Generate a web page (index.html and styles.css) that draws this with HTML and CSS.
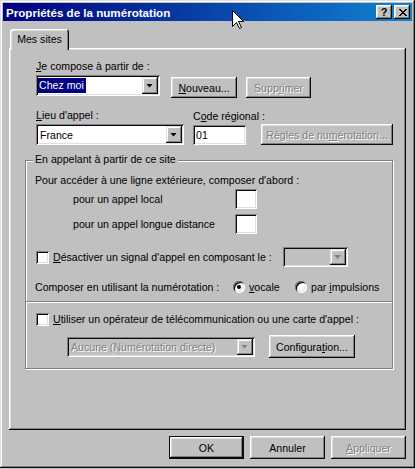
FILE: index.html
```html
<!DOCTYPE html>
<html lang="fr">
<head>
<meta charset="UTF-8">
<title>Propriétés de la numérotation</title>
<link rel="stylesheet" href="styles.css">
</head>
<body>
<div class="window">
<div class="titlebar">
<span class="title">Propriétés de la numérotation</span>
<div class="caption-btns">
<span class="cap-btn help">?</span>
<span class="cap-btn close">
<svg width="8" height="7" viewBox="0 0 8 7" shape-rendering="crispEdges"><path d="M0 0h2v1h-2zM6 0h2v1h-2zM1 1h2v1h-2zM5 1h2v1h-2zM2 2h4v1h-4zM3 3h2v1h-2zM2 4h4v1h-4zM1 5h2v1h-2zM5 5h2v1h-2zM0 6h2v1h-2zM6 6h2v1h-2z" fill="#000"/></svg>
</span>
</div>
</div>

<div class="dialog">
<div class="tab">Mes sites</div>
<div class="panel">

<div class="top">
<div class="label"><u>J</u>e compose à partir de :</div>
<div class="row1">
<div class="combo combo-site">
<span class="combo-value"><span class="sel">Chez moi</span></span>
<span class="drop"></span>
</div>
<button type="button" class="btn btn-new"><u>N</u>ouveau...</button>
<button type="button" class="btn btn-del" disabled>Supp<u>r</u>imer</button>
</div>

<div class="row2">
<div class="field">
<div class="label"><u>L</u>ieu d'appel :</div>
<div class="combo combo-country">
<span class="combo-value">France</span>
<span class="drop"></span>
</div>
</div>
<div class="field field-code">
<div class="label">C<u>o</u>de régional :</div>
<input type="text" class="text-box code-box" value="01">
</div>
<button type="button" class="btn btn-rules" disabled>Règles de nu<u>m</u>érotation...</button>
</div>
</div>

<div class="group">
<div class="legend">En appelant à partir de ce site</div>
<div class="line intro">Pour accéder à une ligne extérieure, composer d'abord :</div>
<div class="row-num first">
<span class="num-label">pour un appel local</span>
<input type="text" class="text-box num-box">
</div>
<div class="row-num second">
<span class="num-label">pour un appel longue distance</span>
<input type="text" class="text-box num-box">
</div>
<div class="row-check">
<span class="check"></span>
<span class="check-label wait-label"><u>D</u>ésactiver un signal d'appel en composant le :</span>
<div class="combo combo-wait disabled">
<span class="combo-value"></span>
<span class="drop"></span>
</div>
</div>
<div class="row-radio">
<span class="radio-label">Composer en utilisant la numérotation :</span>
<span class="radio on"></span>
<span class="radio-text vocal"><u>v</u>ocale</span>
<span class="radio"></span>
<span class="radio-text">par <u>i</u>mpulsions</span>
</div>
<div class="divider"></div>
<div class="row-check row-card-check">
<span class="check"></span>
<span class="check-label"><u>U</u>tiliser un opérateur de télécommunication ou une carte d'appel :</span>
</div>
<div class="row-card">
<div class="combo combo-card disabled">
<span class="combo-value">Aucune (Numérotation directe)</span>
<span class="drop"></span>
</div>
<button type="button" class="btn btn-config">Configura<u>t</u>ion...</button>
</div>
</div>

</div>
<div class="actions">
<button type="button" class="btn btn-action default">OK</button>
<button type="button" class="btn btn-action">Annuler</button>
<button type="button" class="btn btn-action" disabled><u>A</u>ppliquer</button>
</div>
</div>

<svg class="cursor" width="13" height="20" viewBox="0 0 13 20"><path d="M0.5 0.5V16.5L4.5 12.5L7.5 18.5L9.5 17.5L6.5 11.5H11.5Z" fill="#fff" stroke="#000" stroke-width="1" stroke-linejoin="miter"/></svg>
</div>
</body>
</html>
```

FILE: styles.css
```css
html, body { margin: 0; padding: 0; }
body { background: #c0c0c0; font-family: "Liberation Sans", Arial, sans-serif; font-size: 10.6px; color: #000; }
u { text-decoration: underline; text-underline-offset: 1px; }

.window { position: relative; width: 415px; height: 468px; box-sizing: border-box; padding: 3px; background: #c0c0c0;
  box-shadow: inset -1px -1px #0a0a0a, inset 1px 1px #dfdfdf, inset -2px -2px #808080, inset 2px 2px #fff; }

.titlebar { height: 18px; display: flex; align-items: center; justify-content: space-between; padding: 0 2px 0 3px; background: linear-gradient(90deg, #000080, #1084d0); }
.title { color: #fff; font-weight: bold; font-size: 11.6px; }
.caption-btns { display: flex; gap: 2px; }
.cap-btn { width: 16px; height: 14px; display: flex; align-items: center; justify-content: center; background: #c0c0c0; font-weight: bold; font-size: 11px; line-height: 14px;
  box-shadow: inset -1px -1px #0a0a0a, inset 1px 1px #fff, inset -2px -2px #808080, inset 2px 2px #dfdfdf; }
.cap-btn.close svg { display: block; margin-left: 1px; }

.dialog { padding: 8px 6px 0 6px; }
.tab { position: relative; z-index: 1; width: 59px; height: 21px; box-sizing: border-box; padding-bottom: 2px; margin: 0 0 -2px 1px; display: flex; align-items: center; justify-content: center; background: #c0c0c0; border-radius: 3px 3px 0 0;
  box-shadow: inset 1px 1px #fff, inset -1px 0 #0a0a0a, inset -2px 0 #808080, inset 2px 2px #dfdfdf; }
.panel { height: 382px; box-sizing: border-box; padding: 12px 13px 0 16px;
  box-shadow: inset -1px -1px #0a0a0a, inset 1px 1px #fff, inset -2px -2px #808080, inset 2px 2px #dfdfdf; }

.label { height: 13px; line-height: 13px; white-space: nowrap; }
.top { padding-left: 11px; }
.row1 { display: flex; align-items: flex-start; margin-top: 2px; }
.row2 { display: flex; align-items: flex-end; margin-top: 11px; }
.field { display: flex; flex-direction: column; gap: 2px; }
.field-code { width: 53px; margin-left: 9px; }

.btn { font: inherit; color: #000; border: 0; padding: 0; background: #c0c0c0; white-space: nowrap;
  box-shadow: inset -1px -1px #0a0a0a, inset 1px 1px #fff, inset -2px -2px #808080, inset 2px 2px #dfdfdf; }
.btn:disabled { color: #808080; text-shadow: 1px 1px 0 #fff; }
.btn-new { width: 66px; height: 21px; margin: 2px 0 0 11px; }
.btn-del { width: 65px; height: 21px; margin: 2px 0 0 9px; }
.btn-rules { width: 132px; height: 21px; margin-left: 15px; }
.btn-config { width: 86px; height: 23px; margin-left: 14px; }
.btn-action { width: 75px; height: 23px; }
.btn.default { box-shadow: inset 0 0 0 1px #0a0a0a, inset -2px -2px #0a0a0a, inset 2px 2px #fff, inset -3px -3px #808080, inset 3px 3px #dfdfdf; }

.combo { display: flex; box-sizing: border-box; padding: 2px; background: #fff;
  box-shadow: inset 1px 1px #808080, inset -1px -1px #fff, inset 2px 2px #0a0a0a, inset -2px -2px #dfdfdf; }
.combo.disabled { background: #c0c0c0; color: #808080; text-shadow: 1px 1px 0 #fff; }
.combo-value { flex: 1; display: flex; align-items: center; padding-left: 2px; white-space: nowrap; overflow: hidden; }
.sel { height: 15px; line-height: 15px; margin-left: -2px; padding: 0 2px 0 1px; background: #000080; color: #fff; }
.drop { width: 16px; display: flex; align-items: center; justify-content: center; background: #c0c0c0;
  box-shadow: inset -1px -1px #0a0a0a, inset 1px 1px #dfdfdf, inset -2px -2px #808080, inset 2px 2px #fff; }
.drop::after { content: ""; width: 7px; height: 4px; margin: 0 1px 0 0; background: #000; clip-path: polygon(0 0, 100% 0, 50% 100%); }
.combo.disabled .drop::after { background: #808080; }
.combo-site { width: 124px; height: 21px; }
.combo-country { width: 148px; height: 21px; }
.combo-wait { width: 65px; height: 20px; }
.combo-card { width: 188px; height: 20px; }

.text-box { display: block; box-sizing: border-box; border: 0; margin: 0; padding: 0 0 0 3px; font: inherit; color: #000; background: #fff; outline: none;
  box-shadow: inset 1px 1px #808080, inset -1px -1px #fff, inset 2px 2px #0a0a0a, inset -2px -2px #dfdfdf; }
.code-box { width: 53px; height: 20px; }
.num-box { width: 22px; height: 20px; }

.group { margin-top: 15px; border: 1px solid #808080; padding: 0 0 10px 0; box-shadow: 1px 1px 0 #fff, inset 1px 1px 0 #fff; }
.legend { width: fit-content; height: 13px; line-height: 13px; margin: -8px 0 0 7px; padding: 0 2px; background: #c0c0c0; white-space: nowrap; }
.line { height: 13px; line-height: 13px; white-space: nowrap; }
.intro { margin-top: 8px; padding-left: 9px; }
.row-num { display: flex; align-items: center; height: 20px; padding-left: 47px; }
.row-num.first { margin-top: 2px; }
.row-num.second { margin-top: 5px; }
.num-label { width: 162px; white-space: nowrap; }

.row-check { display: flex; align-items: center; height: 20px; margin-top: 13px; padding-left: 10px; }
.check { width: 13px; height: 13px; flex: none; background: #fff;
  box-shadow: inset 1px 1px #808080, inset -1px -1px #fff, inset 2px 2px #0a0a0a, inset -2px -2px #dfdfdf; }
.check-label { margin-left: 4px; white-space: nowrap; }
.wait-label { width: 230px; }

.row-radio { display: flex; align-items: center; height: 14px; margin-top: 13px; padding-left: 9px; }
.radio-label { width: 198px; white-space: nowrap; }
.radio { position: relative; width: 12px; height: 12px; flex: none; border-radius: 50%; background: #fff;
  box-shadow: inset 1px 1px #808080, inset -1px -1px #fff, inset 2px 2px #0a0a0a, inset -2px -2px #dfdfdf; }
.radio.on::after { content: ""; position: absolute; left: 4px; top: 4px; width: 4px; height: 4px; border-radius: 50%; background: #000; }
.radio-text { margin-left: 4px; white-space: nowrap; }
.radio-text.vocal { width: 46px; }

.divider { margin-top: 7px; border-top: 1px solid #808080; border-bottom: 1px solid #fff; }
.row-card-check { height: 14px; margin-top: 9px; }
.row-card { display: flex; align-items: center; height: 23px; margin-top: 9px; padding-left: 41px; }

.actions { display: flex; justify-content: flex-end; gap: 6px; margin-top: 6px; }

.cursor { position: absolute; left: 232px; top: 10px; }
```
